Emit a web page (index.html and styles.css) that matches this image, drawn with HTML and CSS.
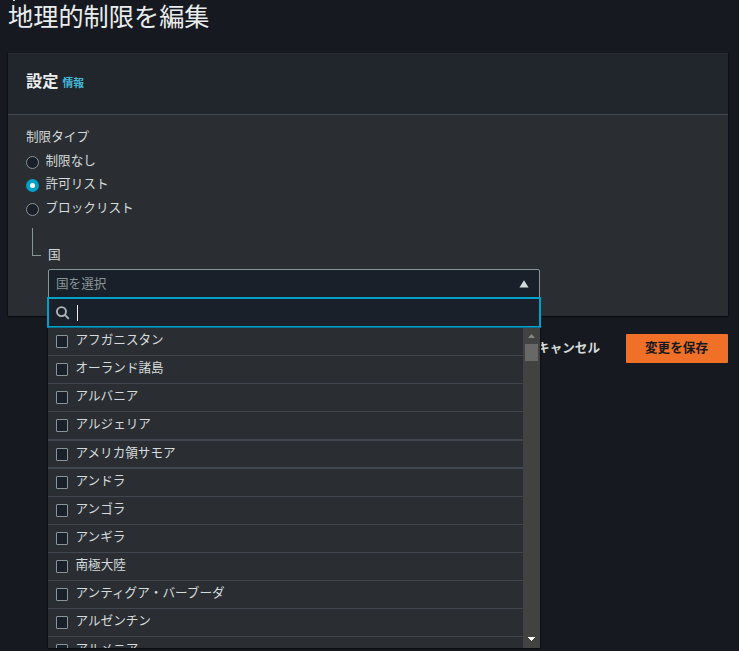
FILE: index.html
```html
<!DOCTYPE html>
<html lang="ja">
<head>
<meta charset="utf-8">
<title>地理的制限を編集</title>
<link rel="stylesheet" href="styles.css">
</head>
<body>
<main class="page">
  <h1 class="title">地理的制限を編集</h1>
  <section class="card">
    <header class="card-header"><h2>設定</h2><a class="info">情報</a></header>
    <div class="card-body">
      <div class="label">制限タイプ</div>
      <div class="radios">
        <label class="radio"><i class="dot"></i><span>制限なし</span></label>
        <label class="radio"><i class="dot checked"></i><span>許可リスト</span></label>
        <label class="radio"><i class="dot"></i><span>ブロックリスト</span></label>
      </div>
      <div class="nested">
        <div class="branch"></div>
        <div class="field">
          <div class="field-label">国</div>
          <div class="select">
            <div class="trigger"><span>国を選択</span><svg width="10" height="8" viewBox="0 0 10 8"><path d="M5 .3 9.6 7.6H.4z" fill="#d5dbdb"/></svg></div>
            <div class="dropdown">
              <div class="search">
                <svg width="14" height="14" viewBox="0 0 14 14" fill="none" stroke="#aab7b8" stroke-width="1.9"><circle cx="5.5" cy="5.6" r="4.5"/><path d="m8.8 8.9 4 4"/></svg>
                <i class="caret"></i>
              </div>
              <div class="panel">
                <ul class="options">
                  <li><i class="box"></i><span>アフガニスタン</span></li>
                  <li><i class="box"></i><span>オーランド諸島</span></li>
                  <li><i class="box"></i><span>アルバニア</span></li>
                  <li class="strong"><i class="box"></i><span>アルジェリア</span></li>
                  <li class="strong"><i class="box"></i><span>アメリカ領サモア</span></li>
                  <li><i class="box"></i><span>アンドラ</span></li>
                  <li><i class="box"></i><span>アンゴラ</span></li>
                  <li><i class="box"></i><span>アンギラ</span></li>
                  <li><i class="box"></i><span>南極大陸</span></li>
                  <li><i class="box"></i><span>アンティグア・バーブーダ</span></li>
                  <li><i class="box"></i><span>アルゼンチン</span></li>
                  <li><i class="box"></i><span>アルメニア</span></li>
                </ul>
                <div class="scrollbar">
                  <svg width="7" height="4" viewBox="0 0 7 4"><path d="M3.5 0 7 4H0z" fill="#868686"/></svg>
                  <i class="thumb"></i>
                  <svg class="down" width="7" height="4" viewBox="0 0 7 4"><path d="M0 0h7v1H6v1H5v1H4v1H3V3H2V2H1V1H0z" fill="#fff"/></svg>
                </div>
              </div>
            </div>
          </div>
        </div>
      </div>
    </div>
  </section>
  <footer class="actions"><a class="cancel">キャンセル</a><button class="save">変更を保存</button></footer>
</main>
</body>
</html>
```
FILE: styles.css
```css
* { box-sizing: border-box; }
body {
  margin: 0;
  height: 651px;
  overflow: hidden;
  background: #16191f;
  color: #d5dbdb;
  font: 12.6px/20px "Noto Sans CJK JP", sans-serif;
}
.page {
  padding: 0 11px 0 8px;
  background: linear-gradient(#d5dbdb, #d5dbdb) 13px 0 / 2px 1px no-repeat;
}
.title {
  margin: 0;
  height: 53px;
  font-size: 25.2px;
  line-height: 30px;
  font-weight: 400;
  color: #eaeded;
}
.card {
  height: 263px;
  background: #2a2e33;
  border-top: 1px solid #2a2e33;
  box-shadow: 0 1px 1px #0b0d10, -1px 0 1px #0f1217, 1px 0 1px #0f1217;
}
.card-header {
  display: flex;
  align-items: baseline;
  gap: 4px;
  height: 61px;
  padding: 14px 18px 0;
  background: #21252c;
  border-bottom: 1px solid #414750;
}
.card-header h2 { margin: 0; font-size: 16.2px; line-height: 24px; color: #eaeded; }
.info { font-size: 10.8px; line-height: 16px; font-weight: 700; color: #44b9d6; }
.card-body { padding: 11px 18px 0; }
.label { height: 23px; }
.radios { display: grid; grid-auto-rows: 23.4px; }
.radio { display: flex; gap: 6.5px; }
.radio span { padding-top: 1px; }
.dot {
  width: 13px;
  height: 13px;
  margin-top: 7px;
  border: 1px solid #879596;
  border-radius: 50%;
  background: #1a2029;
}
.dot.checked { border: 4px solid #00a1c9; background: #fff; }
.nested { display: flex; margin-top: 9px; padding-left: 6px; }
.branch {
  width: 9px;
  height: 28px;
  margin-right: 7px;
  border-left: 1px solid #879596;
  border-bottom: 1px solid #879596;
}
.field { width: 492px; }
.field-label { height: 41px; padding-top: 16px; }
.select { position: relative; }
.trigger {
  display: flex;
  align-items: center;
  justify-content: space-between;
  height: 29px;
  padding: 0 10px 2px 7px;
  background: #1a2029;
  border: 1px solid #879596;
  border-radius: 2px 2px 0 0;
  color: #879596;
}
.trigger svg { margin-top: 2px; }
.dropdown { position: absolute; top: 28px; left: -1px; width: 494px; z-index: 1; }
.search {
  display: flex;
  align-items: center;
  gap: 7px;
  height: 31px;
  padding-left: 7px;
  background: #1a2029;
  border: 2px solid #00a1c9;
}
.search svg { margin-top: 1px; }
.caret { width: 1px; height: 16px; background: #eaeded; }
.panel {
  display: flex;
  width: 492px;
  height: 320px;
  margin-left: 1px;
  overflow: hidden;
  background: #2a2e33;
  box-shadow: 0 1px 1px #0b0d10, -1px 0 1px #0f1217, 1px 0 1px #0f1217;
}
.options { width: 475px; margin: 0; padding: 0; list-style: none; }
.options li {
  display: flex;
  gap: 7.5px;
  height: 28.1px;
  padding: 1px 0 0 8px;
  border-bottom: 1px solid #414750;
}
.options li.strong { border-bottom-width: 2px; }
.box {
  width: 12px;
  height: 13px;
  margin-top: 6px;
  border: 1px solid #879596;
  border-radius: 1px;
  background: #1a2029;
}
.scrollbar {
  display: flex;
  flex-direction: column;
  align-items: center;
  width: 17px;
  padding: 6px 0 7px;
  background: #424242;
}
.thumb { width: 13px; height: 17px; margin-top: 6px; background: #686868; }
.down { margin-top: auto; }
.actions {
  display: flex;
  justify-content: flex-end;
  align-items: center;
  gap: 26px;
  margin-top: 18px;
  font-weight: 700;
}
.cancel { padding-bottom: 3px; }
.save {
  width: 102px;
  height: 29px;
  padding: 0 1px 3px 0;
  border: 0;
  border-radius: 1px;
  background: #f07028;
  color: #16191f;
  font: inherit;
}
```
